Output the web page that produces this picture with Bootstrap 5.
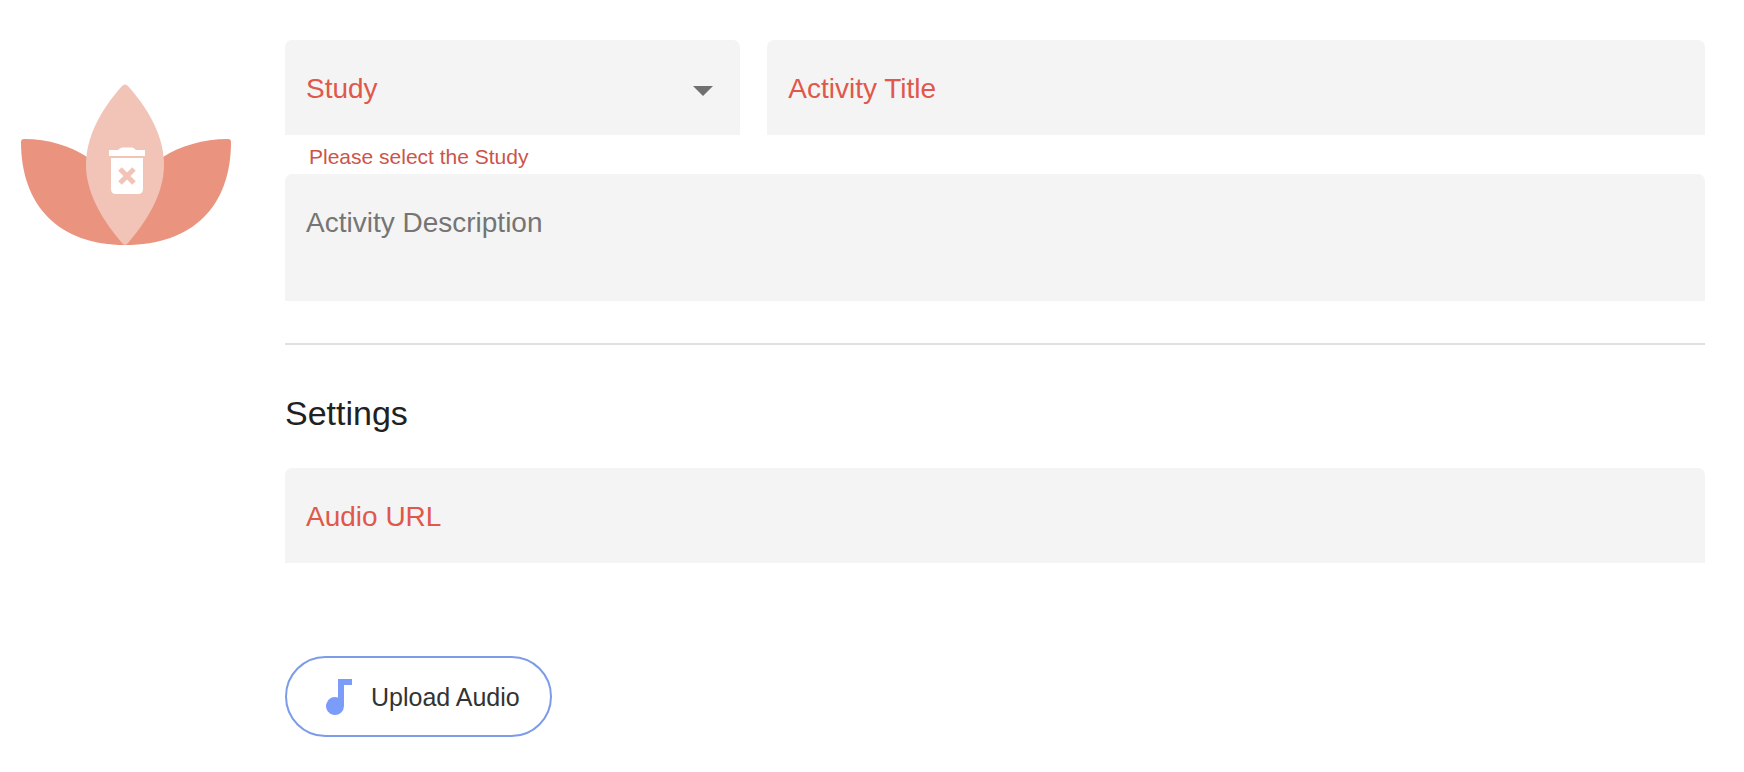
<!DOCTYPE html>
<html lang="en">
<head>
<meta charset="utf-8">
<meta name="viewport" content="width=device-width, initial-scale=1">
<title>Activity</title>
<link rel="stylesheet" href="https://cdn.jsdelivr.net/npm/bootstrap@5.3.0/dist/css/bootstrap.min.css">
<style>
  body { font-family: "Liberation Sans", Arial, sans-serif; color: #212121; background: #fff; }
  .activity-page { padding: 40px 39px 32px 21px; gap: 54px; }
  .activity-icon { width: 210px; margin-top: 44px; }
  .activity-row { --bs-gutter-x: 27px; }
  .filled > .form-control, .filled > .form-select {
    height: 95px; padding: 33px 21px 30px; border: 0; border-radius: 7px 7px 0 0;
    background-color: #f4f4f4; font-size: 28px; line-height: 32px; box-shadow: none;
  }
  .filled > textarea.form-control { height: 127px; resize: none; }
  .filled > .form-select {
    background-image: url("data:image/svg+xml,%3Csvg xmlns='http://www.w3.org/2000/svg' viewBox='0 0 20 10'%3E%3Cpath d='M0 0h20L10 10z' fill='%23707070'/%3E%3C/svg%3E");
    background-size: 20px 10px; background-position: right 27px top 46px;
  }
  .filled > label { padding: 33px 21px 30px; border: 0; font-size: 28px; line-height: 32px; color: #757575; }
  .filled > .form-select ~ label { transform: none; opacity: 1; }
  .filled.needed > label { color: #e0584a; }
  .filled > .form-control:focus ~ label, .filled > .form-control:not(:placeholder-shown) ~ label { padding: 16px 21px; }
  .helper { padding: 10px 24px 5px; font-size: 21px; line-height: 24px; color: #cb5549; }
  .divider { margin: 42px 0 48px; border-top: 2px solid #e0e0e0; opacity: 1; }
  .section-title { margin: 0 0 35px; font-size: 34px; line-height: 40px; font-weight: 400; }
  .upload-btn {
    --bs-btn-color: #333; --bs-btn-hover-color: #333; --bs-btn-hover-bg: #f4f7ff;
    --bs-btn-border-color: #7c9be9; --bs-btn-hover-border-color: #7c9be9;
    height: 81px; margin-top: 93px; padding: 0 30px 0 39px; gap: 19px;
    border-width: 2px; font-size: 25px; line-height: 32px;
  }
</style>
</head>
<body>
<main class="activity-page d-flex align-items-start">
  <button type="button" class="activity-icon btn p-0 border-0 flex-shrink-0" aria-label="Remove image">
    <svg class="d-block w-100" viewBox="0 0 210 161" aria-hidden="true">
      <path fill="#ea947f" d="M3 55C28 55 49 62 66 73L104 161C38 161 0 122 0 58Q0 55 3 55Z"/>
      <path fill="#ea947f" d="M207 55C182 55 159 62 142 73L104 161C172 161 210 122 210 58Q210 55 207 55Z"/>
      <path fill="#f2c4b8" d="M101 2Q104-1 107 2C123 20 143 48 143 81C143 112 123 140 107 159Q104 162 101 159C85 140 65 112 65 81C65 48 85 20 101 2Z"/>
      <path fill="#fff" d="M88 66h9q2-2.500 4-2.500h10q2 0 4 2.500h9v6H88z"/>
      <path fill="#fff" d="M90 74h32v31q0 5-5 5H95q-5 0-5-5z"/>
      <path stroke="#f2c4b8" stroke-width="5" d="M99 85l14 14m0-14l-14 14"/>
    </svg>
  </button>

  <form class="flex-grow-1">
    <div class="row activity-row">
      <div class="col-4">
        <div class="form-floating filled needed">
          <select class="form-select" id="study" aria-describedby="study-help" required>
            <option value="" selected></option>
          </select>
          <label for="study">Study</label>
        </div>
        <div class="helper" id="study-help">Please select the Study</div>
      </div>
      <div class="col-8">
        <div class="form-floating filled needed">
          <input type="text" class="form-control" id="title" placeholder=" " required>
          <label for="title">Activity Title</label>
        </div>
      </div>
    </div>

    <div class="form-floating filled">
      <textarea class="form-control" id="description" placeholder=" "></textarea>
      <label for="description">Activity Description</label>
    </div>

    <hr class="divider">

    <h2 class="section-title">Settings</h2>
    <div class="form-floating filled needed">
      <input type="url" class="form-control" id="audio" placeholder=" " required>
      <label for="audio">Audio URL</label>
    </div>

    <button type="button" class="upload-btn btn rounded-pill d-inline-flex align-items-center">
      <svg width="26" height="36" viewBox="0 0 26 36" aria-hidden="true"><path fill="#7c9cfa" d="M12 0h14v6h-8v21a9 9 0 1 1-6-8.500z"/></svg>
      Upload Audio
    </button>
  </form>
</main>
<script src="https://cdn.jsdelivr.net/npm/bootstrap@5.3.0/dist/js/bootstrap.bundle.min.js"></script>
</body>
</html>
